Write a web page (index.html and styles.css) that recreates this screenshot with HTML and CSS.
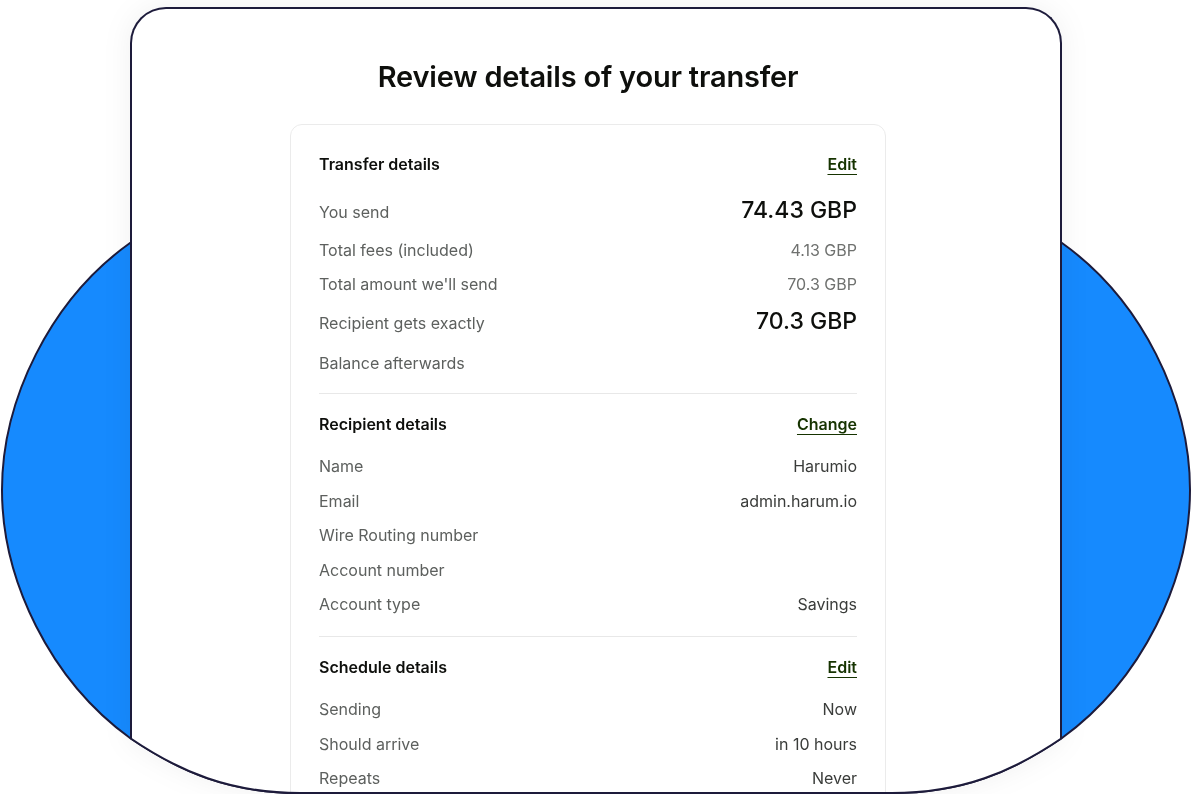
FILE: index.html
```html
<!DOCTYPE html>
<html lang="en">
<head>
  <meta charset="UTF-8">
  <title>Review details of your transfer</title>
  <link rel="stylesheet" href="styles.css">
</head>
<body>
  <div class="stage">
    <!-- blue backdrop shape -->
    <svg class="backdrop" width="1192" height="794" viewBox="0 0 1192 794">
      <path d="M130 243 C50 300 2 400 2 490 C2 580 50 680 130 738 C180 772 230 793 300 793 H892 C962 793 1012 772 1062 738 C1142 680 1190 580 1190 490 C1190 400 1142 300 1062 243 Z"
            fill="#168afe" stroke="#1d1b3b" stroke-width="2"/>
    </svg>

    <div class="card-wrap">
      <div class="card">
        <div class="column">
          <h1>Review details of your transfer</h1>

          <div class="panel">
            <!-- Transfer details -->
            <div class="section first">
              <div class="section-head">
                <span>Transfer details</span>
                <a href="#">Edit</a>
              </div>
              <div class="row big">
                <span class="label">You send</span>
                <span class="value">74.43 GBP</span>
              </div>
              <div class="row">
                <span class="label">Total fees (included)</span>
                <span class="value muted">4.13 GBP</span>
              </div>
              <div class="row">
                <span class="label">Total amount we'll send</span>
                <span class="value muted">70.3 GBP</span>
              </div>
              <div class="row big lift">
                <span class="label">Recipient gets exactly</span>
                <span class="value">70.3 GBP</span>
              </div>
              <div class="row">
                <span class="label">Balance afterwards</span>
                <span class="value"></span>
              </div>
            </div>

            <!-- Recipient details -->
            <div class="section">
              <div class="section-head">
                <span>Recipient details</span>
                <a href="#">Change</a>
              </div>
              <div class="row">
                <span class="label">Name</span>
                <span class="value">Harumio</span>
              </div>
              <div class="row">
                <span class="label">Email</span>
                <span class="value">admin.harum.io</span>
              </div>
              <div class="row">
                <span class="label">Wire Routing number</span>
                <span class="value"></span>
              </div>
              <div class="row">
                <span class="label">Account number</span>
                <span class="value"></span>
              </div>
              <div class="row">
                <span class="label">Account type</span>
                <span class="value">Savings</span>
              </div>
            </div>

            <!-- Schedule details -->
            <div class="section">
              <div class="section-head">
                <span>Schedule details</span>
                <a href="#">Edit</a>
              </div>
              <div class="row">
                <span class="label">Sending</span>
                <span class="value">Now</span>
              </div>
              <div class="row">
                <span class="label">Should arrive</span>
                <span class="value">in 10 hours</span>
              </div>
              <div class="row">
                <span class="label">Repeats</span>
                <span class="value">Never</span>
              </div>
            </div>
          </div>
        </div>
      </div>
    </div>

    <!-- outline of the backdrop drawn over the card's lower edge -->
    <svg class="outline" width="1192" height="794" viewBox="0 0 1192 794">
      <path d="M130 738 C180 772 230 793 300 793 H892 C962 793 1012 772 1062 738"
            fill="none" stroke="#1d1b3b" stroke-width="2"/>
    </svg>
  </div>
</body>
</html>
```

FILE: styles.css
```css
body {
  margin: 0;
  background: #fff;
  font-family: Inter, "Noto Sans", sans-serif;
  color: #0e0f0c;
}
.stage {
  position: relative;
  width: 1192px;
  height: 794px;
  overflow: hidden;
}
.backdrop,
.outline {
  position: absolute;
  left: 0;
  top: 0;
}
.outline {
  pointer-events: none;
}
.card-wrap {
  position: relative;
  width: 932px;
  margin-left: 130px;
  padding-top: 7px;
  filter: drop-shadow(0 0 14px rgba(0, 0, 0, 0.06));
}
.card {
  box-sizing: border-box;
  height: 800px;
  background: #fff;
  border: 2px solid #1d1b3b;
  border-bottom: none;
  border-radius: 36px 36px 0 0;
  clip-path: path("M0 0 H932 V731 C882 765 832 786 762 786 H170 C100 786 50 765 0 731 Z");
}
.column {
  width: 596px;
  margin-left: 158px;
  padding-top: 50px;
}
h1 {
  margin: 0 0 29px;
  font-size: 29px;
  line-height: 36px;
  font-weight: 600;
  text-align: center;
  letter-spacing: -0.2px;
}
.panel {
  border: 1px solid #ebebeb;
  border-radius: 12px;
  padding: 9px 28px 0;
}
.section {
  padding: 18px 0 20px;
  border-bottom: 1px solid #e8e8e8;
}
.section.first {
  padding-bottom: 18px;
}
.section:last-child {
  border-bottom: none;
}
.section-head {
  display: flex;
  justify-content: space-between;
  align-items: center;
  height: 24px;
  margin-bottom: 18px;
  font-size: 16px;
  font-weight: 600;
}
.section.first .section-head {
  margin-bottom: 17px;
}
.section-head a {
  color: #163300;
  text-decoration: underline;
  text-underline-offset: 4px;
  text-decoration-thickness: 1px;
}
.row {
  display: flex;
  justify-content: space-between;
  align-items: baseline;
  height: 24px;
  line-height: 24px;
  margin-bottom: 10.5px;
  font-size: 16px;
}
.row:last-child {
  margin-bottom: 0;
}
.row.big {
  height: 34px;
  line-height: 34px;
}
.row.big.lift {
  line-height: 28px;
}
.label {
  color: #5d605e;
}
.value {
  color: #3a3c3a;
}
.value.muted {
  color: #6f716f;
}
.row.big .value {
  font-size: 23px;
  font-weight: 500;
  color: #0e0f0c;
}
```
